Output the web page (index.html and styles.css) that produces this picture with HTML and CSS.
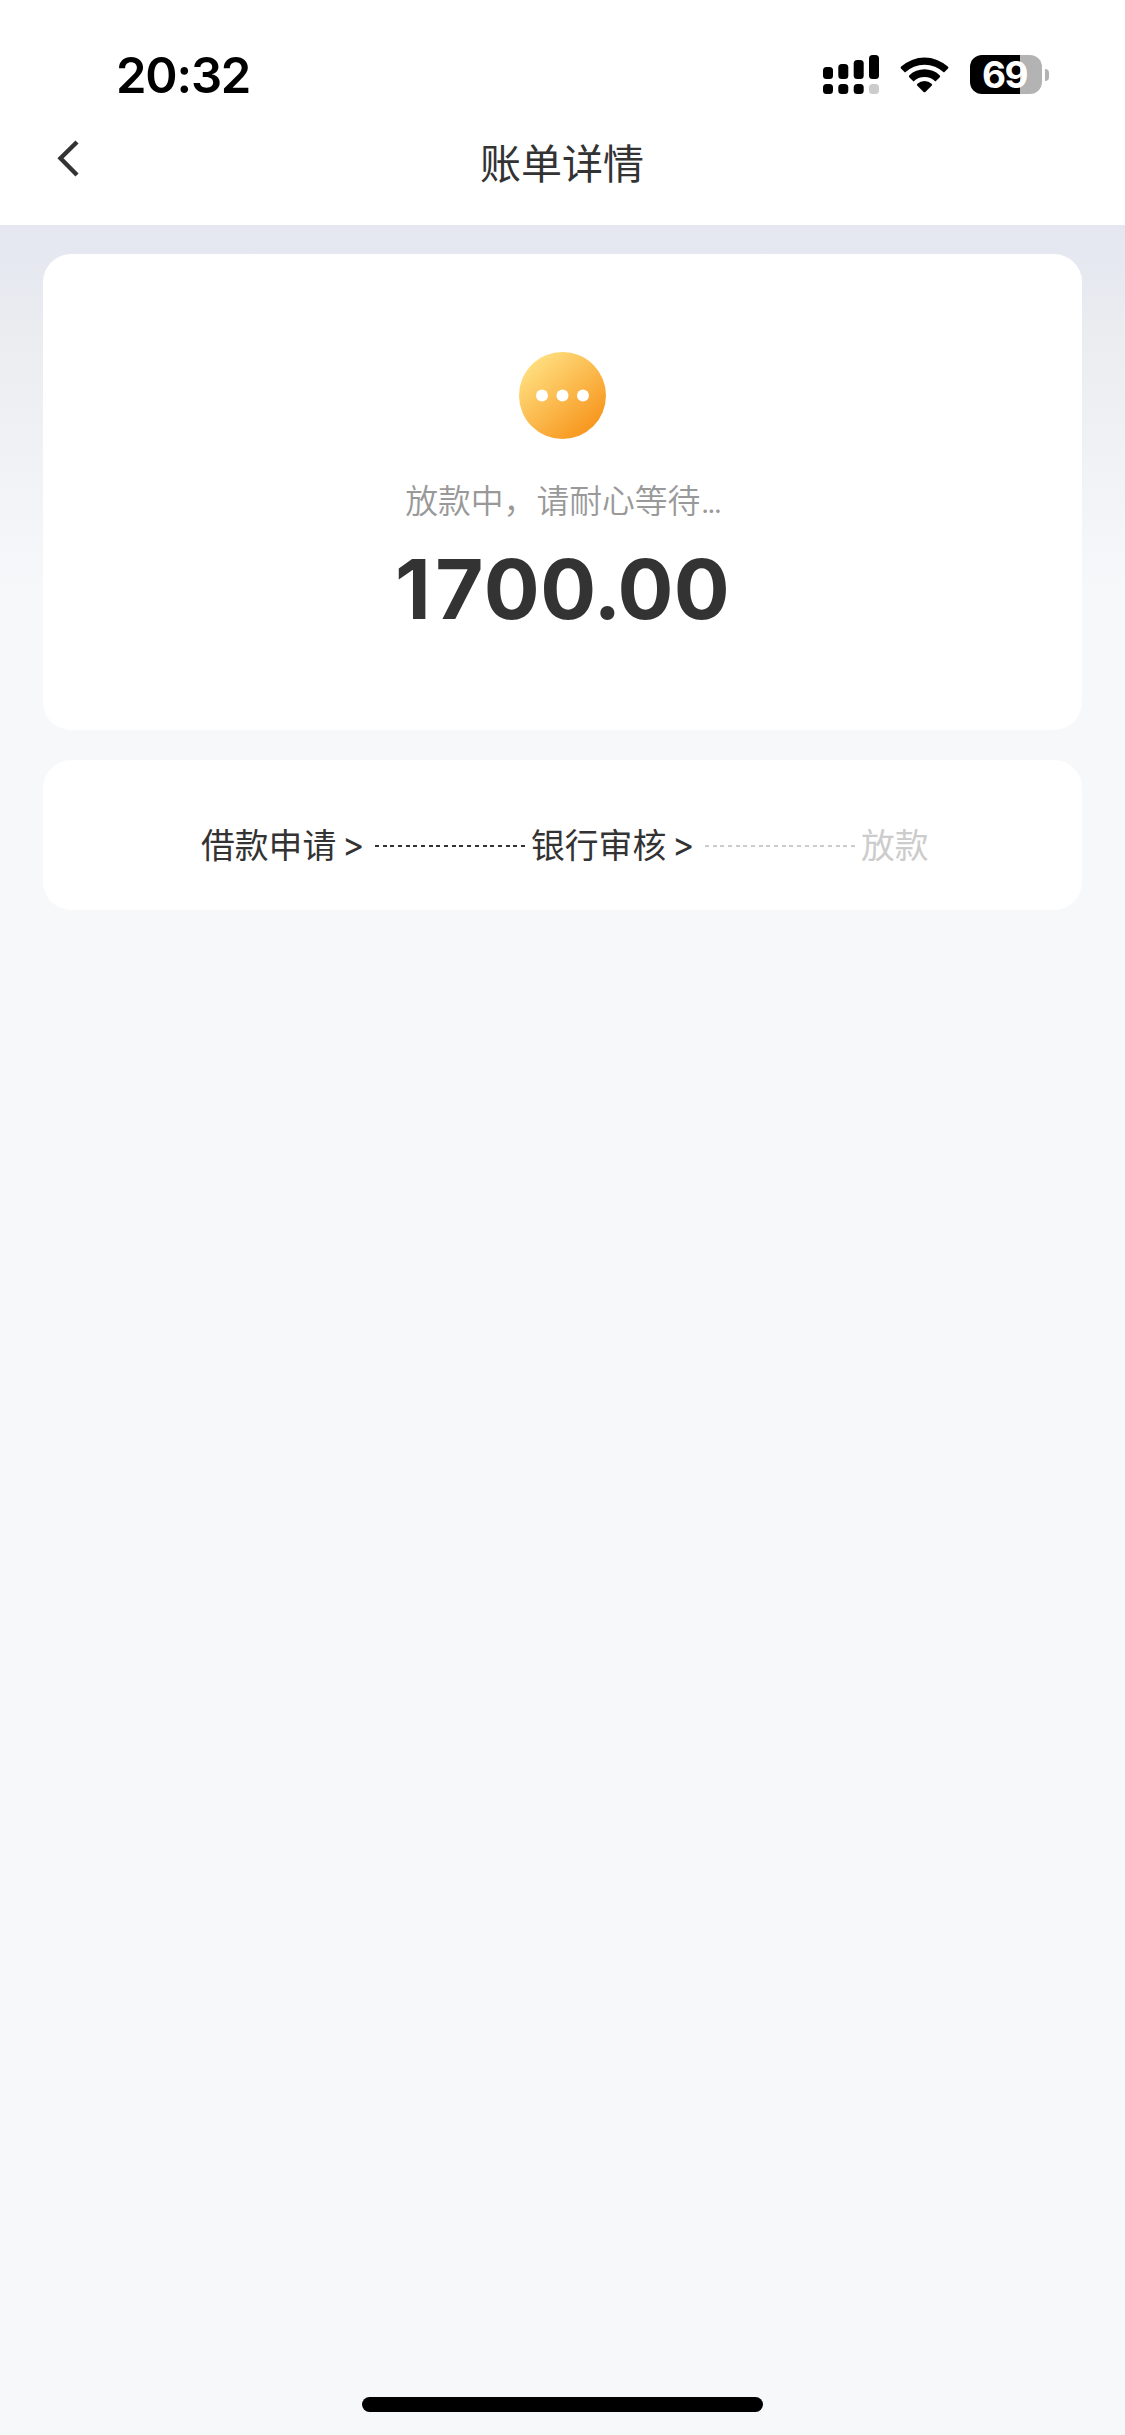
FILE: index.html
```html
<!DOCTYPE html>
<html lang="zh-CN">
<head>
<meta charset="utf-8">
<title>账单详情</title>
<link rel="stylesheet" href="styles.css">
</head>
<body>
<div class="screen">
  <header class="header">
    <div class="status-bar">
      <span class="clock">20:32</span>
      <div class="indicators">
        <svg class="signal" viewBox="0 0 56 39" aria-hidden="true">
          <rect x="0" y="12" width="10" height="12" rx="3.5"/>
          <rect x="15.3" y="9" width="10" height="15" rx="3.5"/>
          <rect x="30.7" y="5" width="10" height="19" rx="3.5"/>
          <rect x="46" y="0" width="10" height="24" rx="3.5"/>
          <rect x="0" y="29" width="10" height="10" rx="3.5"/>
          <rect x="15.3" y="29" width="10" height="10" rx="3.5"/>
          <rect x="30.7" y="29" width="10" height="10" rx="3.5"/>
          <rect class="faint" x="46" y="29" width="10" height="10" rx="3.5"/>
        </svg>
        <svg class="wifi" viewBox="0 0 50 36" aria-hidden="true">
          <path d="M1.2 9.6A34.5 34.5 0 0 1 47.8 9.6Q48.9 10.7 47.8 11.8L44 15.6A28 28 0 0 0 5 15.6L1.2 11.8Q.1 10.7 1.2 9.6Z"/>
          <path d="M9.4 18.2A22.3 22.3 0 0 1 39.6 18.2Q40.7 19.3 39.6 20.4L35.4 24.4A15.6 15.6 0 0 0 13.6 24.4L9.4 20.4Q8.3 19.3 9.4 18.2Z"/>
          <path d="M17.4 26.7A10.4 10.4 0 0 1 31.6 26.7Q32.6 27.7 31.6 28.7L25.4 34.9Q24.5 35.6 23.6 34.9L17.4 28.7Q16.4 27.7 17.4 26.7Z"/>
        </svg>
        <div class="battery">
          <span class="battery-level">69</span>
          <span class="battery-tip"></span>
        </div>
      </div>
    </div>
    <nav class="nav-bar">
      <svg class="back" viewBox="0 0 24 40" aria-hidden="true"><path d="M21 3L4.5 19.3L21 36"/></svg>
      <h1 class="title">账单详情</h1>
    </nav>
  </header>
  <main class="content">
    <section class="card summary">
      <svg class="pending" viewBox="0 0 87 87" aria-hidden="true">
        <defs>
          <linearGradient id="amber" x1="0.15" y1="0.1" x2="0.85" y2="0.9">
            <stop offset="0" stop-color="#ffdf80"/>
            <stop offset="1" stop-color="#f7951c"/>
          </linearGradient>
        </defs>
        <circle cx="43.5" cy="43.5" r="43.5" fill="url(#amber)"/>
        <circle cx="23" cy="43.5" r="6" fill="#fff"/>
        <circle cx="43.5" cy="43.5" r="6" fill="#fff"/>
        <circle cx="64" cy="43.5" r="6" fill="#fff"/>
      </svg>
      <p class="state">放款中，请耐心等待<span class="dots">...</span></p>
      <p class="amount"><span class="one">1</span>700<span class="point">.</span>00</p>
    </section>
    <section class="card steps">
      <span class="step">借款申请</span>
      <span class="arrow">&gt;</span>
      <span class="dash"></span>
      <span class="step">银行审核</span>
      <span class="arrow">&gt;</span>
      <span class="dash todo"></span>
      <span class="step todo">放款</span>
    </section>
  </main>
  <footer class="home"><span class="home-bar"></span></footer>
</div>
</body>
</html>
```

FILE: styles.css
```css
* { box-sizing: border-box; }
body {
  margin: 0;
  color: #333;
  font-family: Inter, "Noto Sans CJK SC", sans-serif;
}
h1, p { margin: 0; font-weight: 400; }
svg { display: block; flex: none; }

.screen {
  display: flex;
  flex-direction: column;
  width: 1125px;
  height: 2435px;
  background: #f6f8fa;
}

.header { height: 225px; background: #fff; }
.status-bar {
  display: flex;
  justify-content: space-between;
  align-items: center;
  height: 112px;
  padding: 38px 76px 1px 116px;
  color: #000;
}
.clock { padding-top: 2px; font-size: 49px; line-height: 60px; font-weight: 600; letter-spacing: -1.2px; }
.indicators { display: flex; align-items: center; }
.signal { width: 56px; height: 39px; margin-right: 21px; }
.faint { fill: #ccc; }
.wifi { width: 50px; height: 36px; margin-right: 20px; }
.battery { display: flex; align-items: center; gap: 3px; }
.battery-level {
  width: 72px;
  height: 39px;
  padding-right: 3px;
  border-radius: 12px;
  background: linear-gradient(90deg, #000 50px, #b3b3b3 50px);
  color: #fff;
  font-size: 37px;
  line-height: 40px;
  font-weight: 700;
  letter-spacing: -1.5px;
  text-align: center;
}
.battery-tip { width: 4px; height: 12px; border-radius: 0 4px 4px 0; background: #b3b3b3; }

.nav-bar {
  display: grid;
  grid-template-columns: 100px 1fr 100px;
  align-items: start;
  height: 113px;
}
.back {
  width: 24px;
  height: 40px;
  margin: 27px 0 0 56px;
  fill: none;
  stroke: #333;
  stroke-width: 4.4;
}
.title { padding-top: 22px; font-size: 41px; line-height: 60px; text-align: center; text-indent: -1px; }

.content {
  display: flex;
  flex: 1;
  flex-direction: column;
  gap: 30px;
  padding: 29px 43px 0;
  background: linear-gradient(#e4e7f0, #e6e9f0 50px, #eaecf0 100px, #f0f1f5 220px, #f6f8fa 365px);
}
.card { border-radius: 28px; background: #fff; }
.summary {
  display: flex;
  flex-direction: column;
  align-items: center;
  height: 476px;
  padding-top: 98px;
}
.pending { width: 87px; height: 87px; }
.state { margin-top: 37px; color: #999; font-size: 32.8px; line-height: 50px; font-weight: 350; }
.dots { letter-spacing: -2.8px; }
.amount {
  margin-top: 13px;
  font-size: 83px;
  line-height: 100px;
  font-weight: 700;
  font-kerning: none;
  letter-spacing: 0.3px;
}
.one { letter-spacing: 4.5px; }
.point { margin: 0 -4px 0 -3px; }

.steps {
  display: flex;
  align-items: center;
  height: 150px;
  padding: 22px 0 0 158px;
  font-size: 33.8px;
  line-height: 50px;
  white-space: nowrap;
}
.step { flex: none; width: 136px; }
.arrow { flex: none; width: 37px; padding: 0 0 2px 5px; }
.dash {
  flex: none;
  width: 150px;
  height: 2px;
  margin: 0 6px 0 1px;
  background: repeating-linear-gradient(90deg, #333 0 4px, transparent 4px 7.68px);
}
.dash.todo { background: repeating-linear-gradient(90deg, #ccc 0 4px, transparent 4px 7.68px); }
.step.todo { color: #ccc; }

.home { display: flex; justify-content: center; height: 38px; }
.home-bar { width: 401px; height: 15px; border-radius: 8px; background: #000; }
```
